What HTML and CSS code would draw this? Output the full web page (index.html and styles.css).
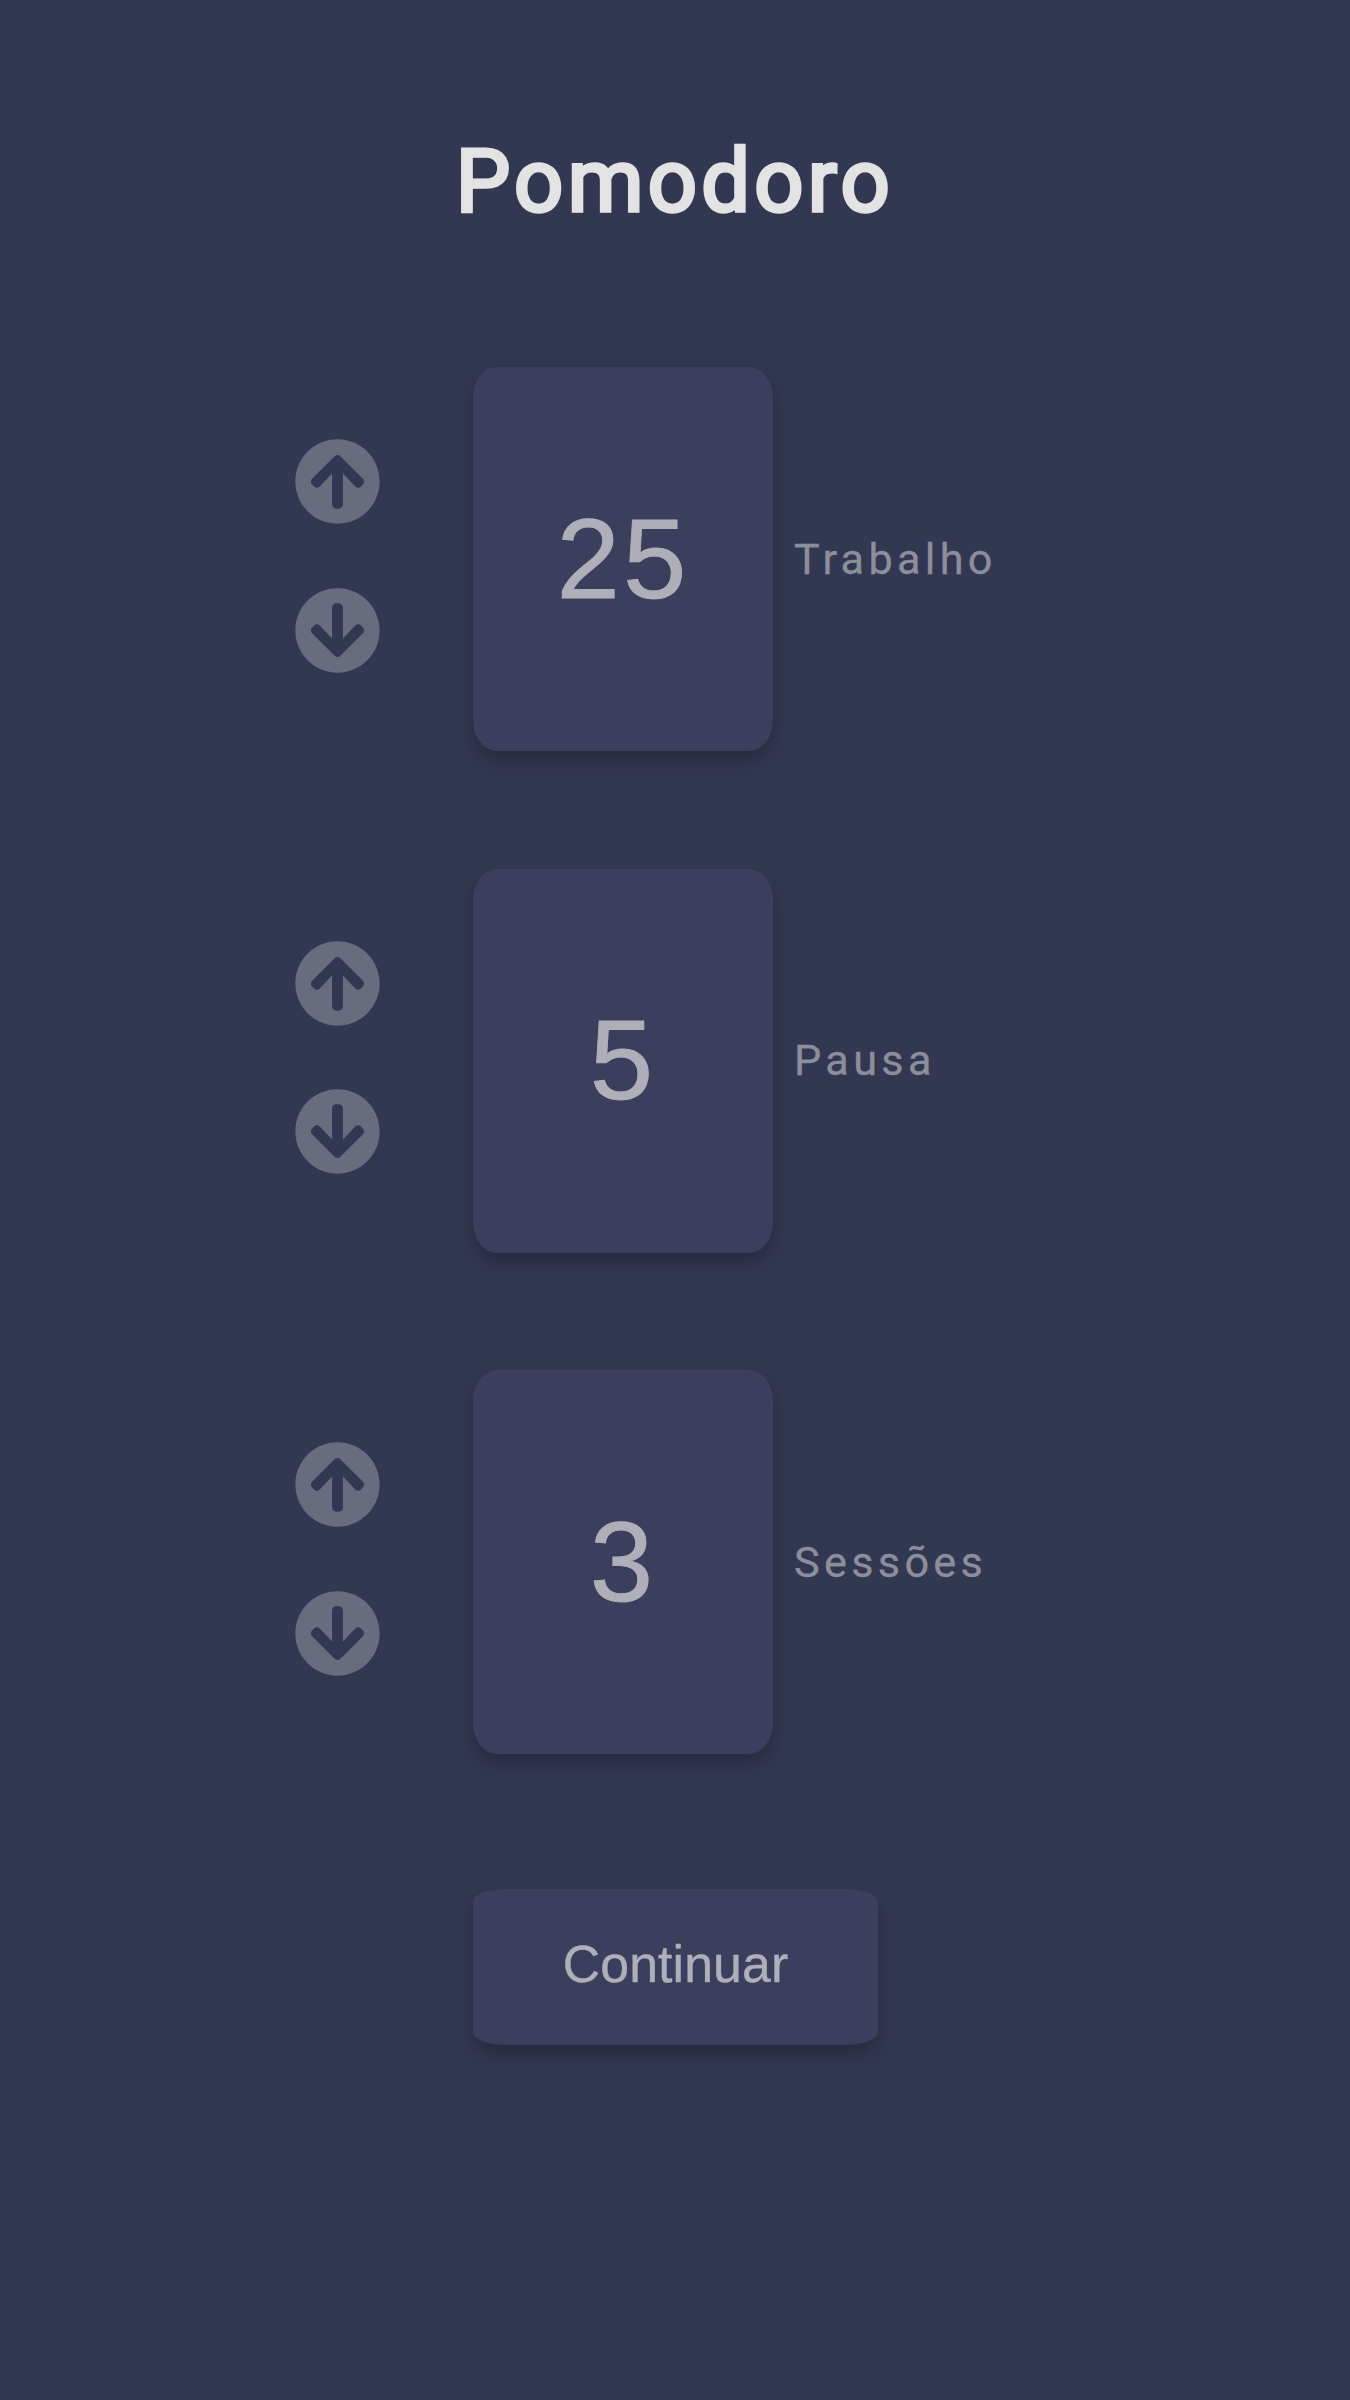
FILE: index.html
```html
<!DOCTYPE html>
<html lang="pt-BR">
<head>
<meta charset="utf-8">
<title>Pomodoro</title>
<link rel="stylesheet" href="styles.css">
</head>
<body>
<svg width="0" height="0" class="sprite" aria-hidden="true">
  <symbol id="up" viewBox="0 0 512 512"><path d="M8 256C8 119 119 8 256 8s248 111 248 248-111 248-248 248S8 393 8 256zm143.600 28.900l72.400-75.500V392c0 13.300 10.700 24 24 24h16c13.300 0 24-10.700 24-24V209.400l72.400 75.500c9.300 9.700 24.800 9.900 34.300.4l10.900-11c9.400-9.400 9.400-24.600 0-33.900L273 107.700c-9.400-9.400-24.600-9.400-33.900 0L106.300 240.400c-9.400 9.400-9.400 24.600 0 33.900l10.900 11c9.600 9.500 25.100 9.300 34.400-.4z"/></symbol>
  <symbol id="down" viewBox="0 0 512 512"><path d="M504 256c0 137-111 248-248 248S8 393 8 256 119 8 256 8s248 111 248 248zm-143.600-28.900L288 302.600V120c0-13.300-10.700-24-24-24h-16c-13.300 0-24 10.700-24 24v182.600l-72.400-75.500c-9.300-9.700-24.800-9.900-34.300-.4l-10.900 11c-9.400 9.400-9.400 24.600 0 33.900L239 404.300c9.400 9.400 24.600 9.400 33.900 0l132.700-132.700c9.400-9.400 9.400-24.600 0-33.900l-10.900-11c-9.500-9.500-25-9.300-34.300.4z"/></symbol>
</svg>
<main class="page">
  <h1 class="title">Pomodoro</h1>
  <section class="settings">
    <div class="row">
      <div class="arrows"><svg class="icon"><use href="#up"/></svg><svg class="icon"><use href="#down"/></svg></div>
      <div class="card">25</div>
      <span class="label">Trabalho</span>
    </div>
    <div class="row">
      <div class="arrows"><svg class="icon"><use href="#up"/></svg><svg class="icon"><use href="#down"/></svg></div>
      <div class="card">5</div>
      <span class="label">Pausa</span>
    </div>
    <div class="row">
      <div class="arrows"><svg class="icon"><use href="#up"/></svg><svg class="icon"><use href="#down"/></svg></div>
      <div class="card">3</div>
      <span class="label">Sessões</span>
    </div>
  </section>
  <button class="continue" type="button">Continuar</button>
</main>
</body>
</html>
```

FILE: styles.css
```css
* { box-sizing: border-box; }
body {
  margin: 0;
  background: #333852;
  font-family: Roboto, sans-serif;
}
.sprite { display: none; }
.page {
  height: 2400px;
  padding-top: 129px;
  display: flex;
  flex-direction: column;
  align-items: center;
}
.title {
  margin: 0 0 132px;
  height: 106px;
  line-height: 106px;
  font-size: 86.4px;
  font-weight: 400;
  letter-spacing: 4.3px;
  color: #e3e3e3;
  -webkit-text-stroke: 3.6px #e3e3e3;
  paint-order: stroke fill;
}
.settings {
  width: 100%;
  display: flex;
  flex-direction: column;
  gap: 117.6px;
}
.row {
  height: 384px;
  padding-left: 294px;
  display: flex;
  align-items: center;
}
.arrows {
  width: 179px;
  padding-bottom: 6px;
  display: flex;
  flex-direction: column;
  gap: 61.4px;
}
.icon {
  width: 87px;
  height: 87px;
  display: block;
  fill: #686c7f;
}
.card {
  width: 300px;
  height: 384px;
  padding-bottom: 2px;
  border-radius: 8%;
  background: #3b3f5d;
  box-shadow: 0 10px 20px rgba(0, 0, 0, 0.25);
  display: flex;
  align-items: center;
  justify-content: center;
  font-family: "Liberation Sans", Arial, sans-serif;
  font-size: 114px;
  letter-spacing: 3.2px;
  color: #afafba;
  -webkit-text-stroke: 0.9px #afafba;
}
.label {
  margin-left: 21px;
  font-size: 43.2px;
  letter-spacing: 4.32px;
  color: #8c8e9c;
  -webkit-text-stroke: 0.3px #8c8e9c;
}
.continue {
  width: 405px;
  height: 156px;
  margin-top: 135px;
  padding: 0 0 6px;
  border: 0;
  border-radius: 8%;
  background: #3b3f5d;
  box-shadow: 0 10px 20px rgba(0, 0, 0, 0.25);
  font-family: "Liberation Sans", Arial, sans-serif;
  font-size: 51.8px;
  letter-spacing: 0.1px;
  text-indent: 1px;
  color: #afafba;
  -webkit-text-stroke: 0.4px #afafba;
}
```
